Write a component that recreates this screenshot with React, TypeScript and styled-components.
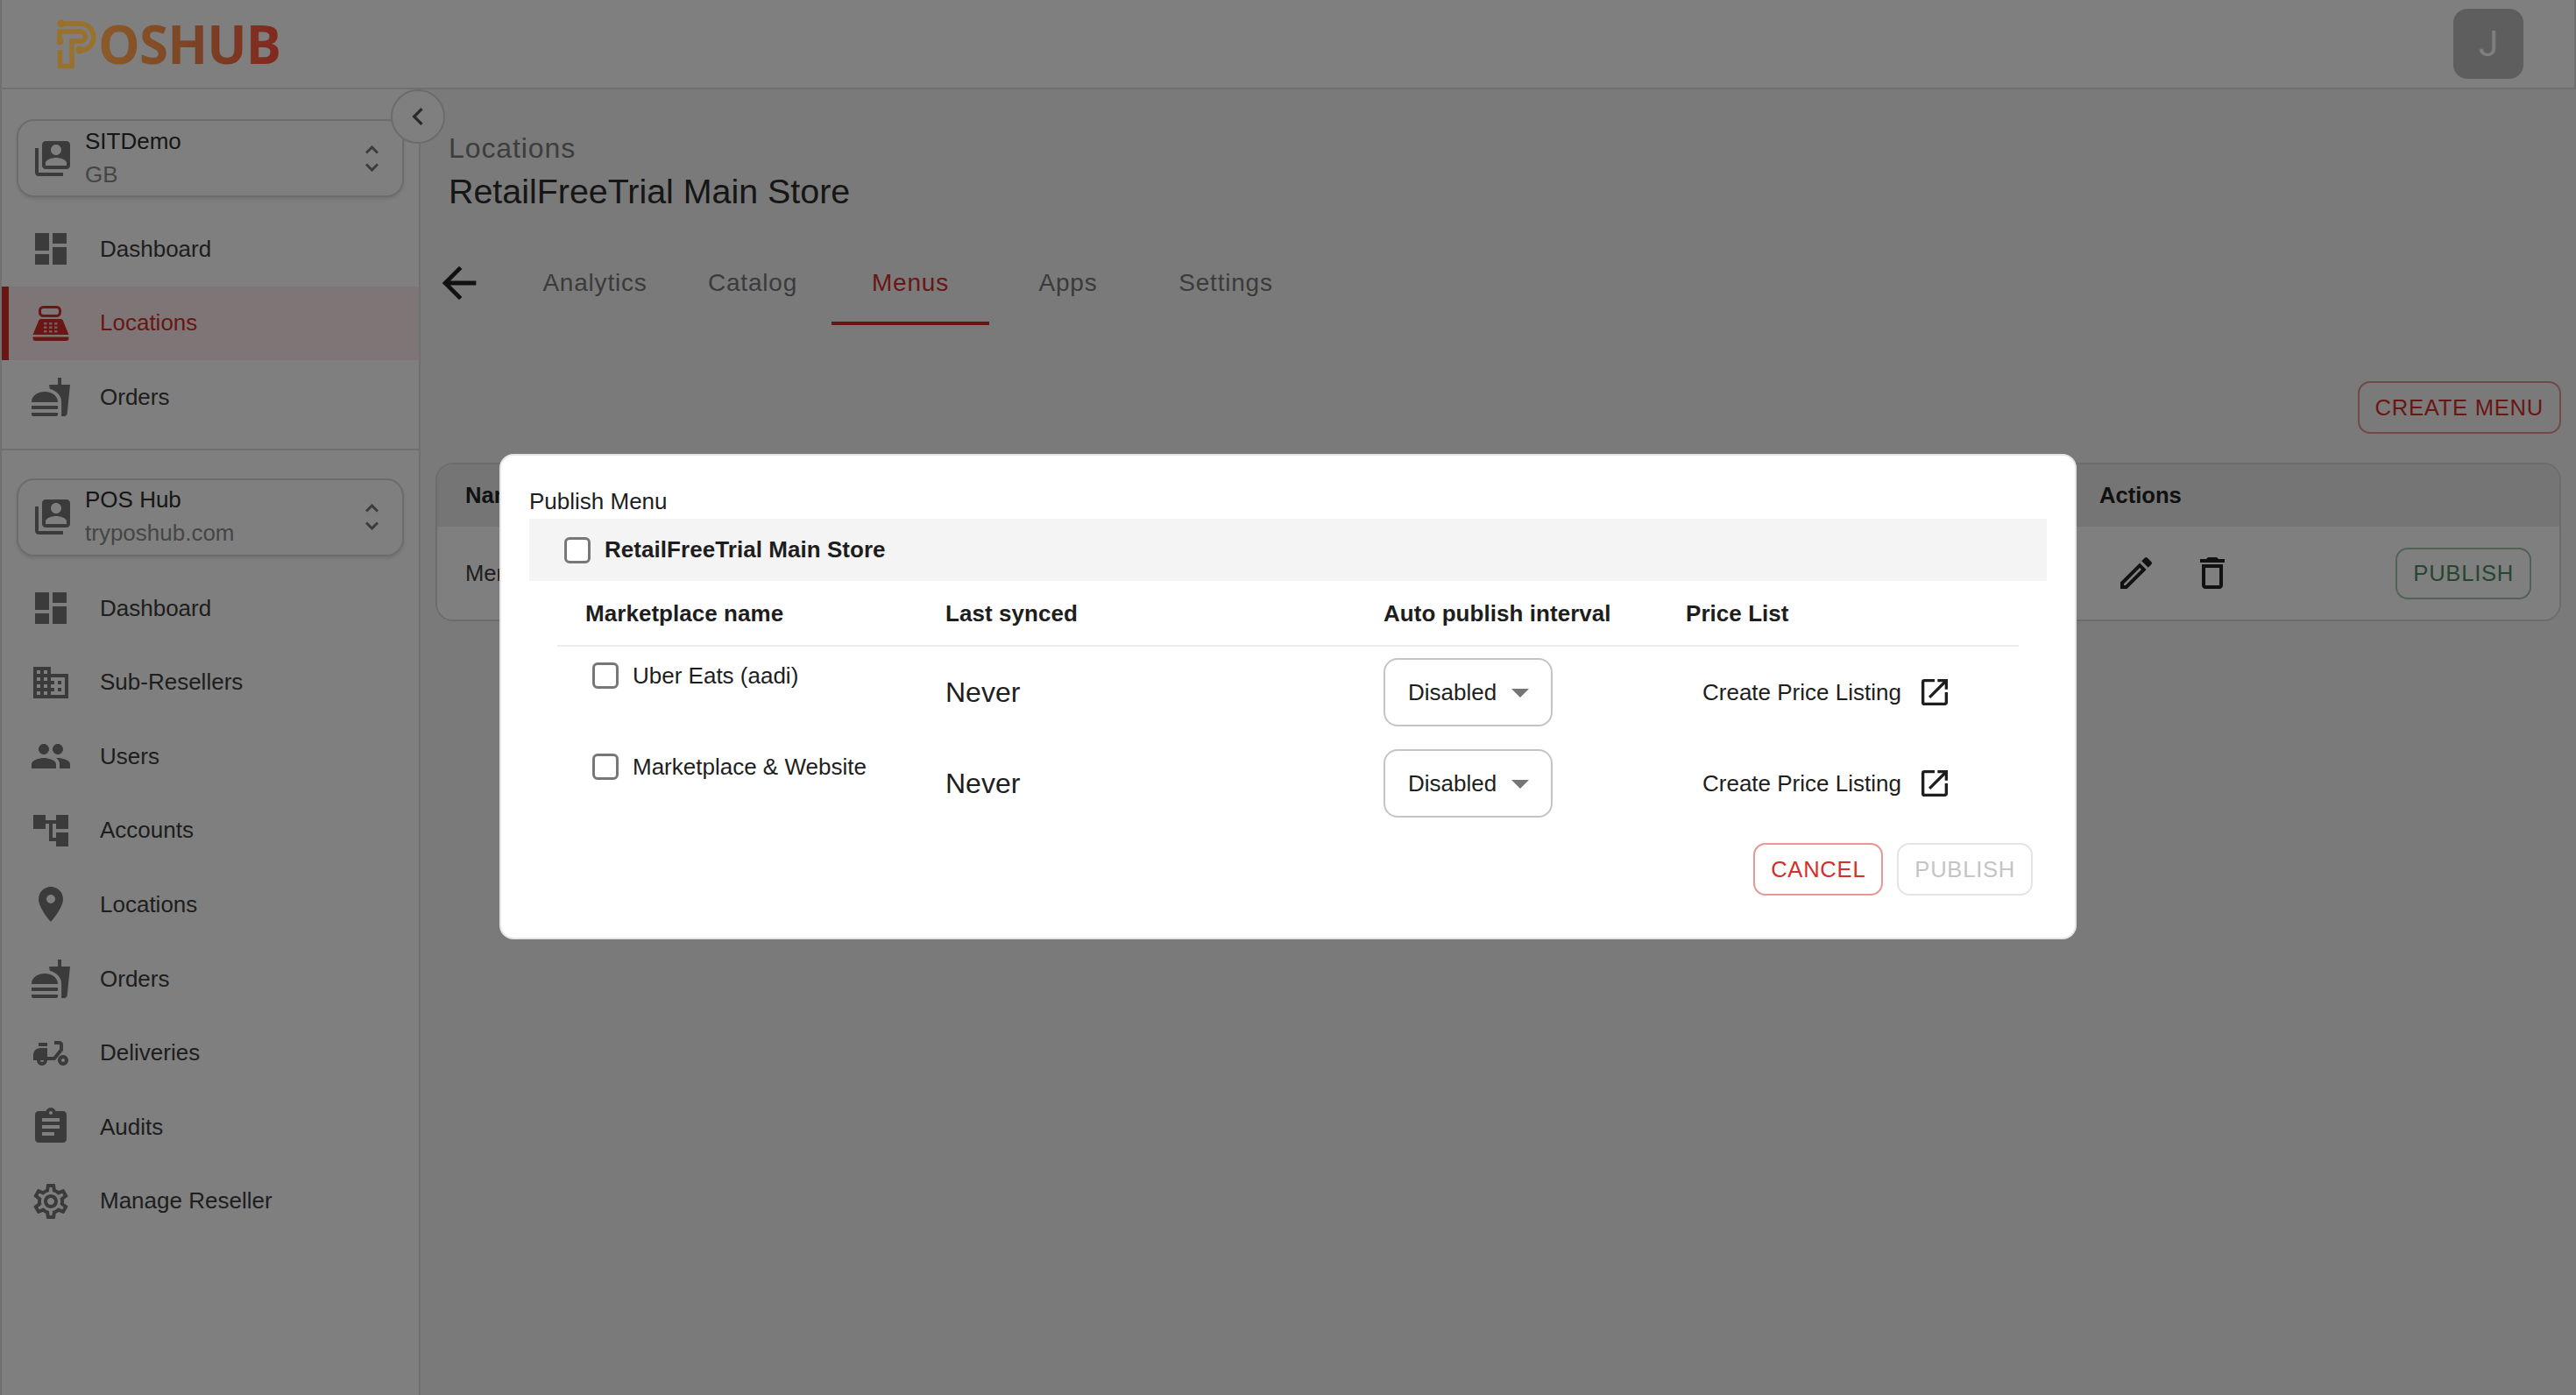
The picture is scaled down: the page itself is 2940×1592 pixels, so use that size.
import React from "react";
import styled, { createGlobalStyle } from "styled-components";
import {
  MdDashboard,
  MdFastfood,
  MdDomain,
  MdPeople,
  MdAccountTree,
  MdLocationOn,
  MdDeliveryDining,
  MdAssignment,
  MdOutlineSettings,
  MdOpenInNew,
  MdOutlineEdit,
  MdOutlineDelete,
  MdArrowBack,
  MdChevronLeft,
  MdSwitchAccount,
  MdArrowDropDown,
} from "react-icons/md";

const Global = createGlobalStyle`
  html, body { margin: 0; height: 100%; overflow: hidden; background: #f5f5f5; }
  * { box-sizing: border-box; }
  body { font-family: "Liberation Sans", Arial, sans-serif; color: #3c3c3c; }
  #root { height: 100%; }
`;

const RED = "#d32f2b";

const Page = styled.div`
  display: flex;
  flex-direction: column;
  height: 1592px;
  width: 2940px;
`;

const Header = styled.header`
  display: flex;
  align-items: center;
  justify-content: space-between;
  height: 102px;
  flex: none;
  background: #fff;
  border: 2px solid #e0e0e0;
  border-top: none;
  padding: 0 58px 0 63px;
`;

const Logo = styled.div`
  display: flex;
  align-items: center;
  gap: 1px;
  position: relative;
  z-index: 20;
`;

const LogoWord = styled.span`
  font-family: "Open Sans", sans-serif;
  font-weight: 700;
  font-size: 60px;
  line-height: 60px;
  letter-spacing: -0.8px;
  background: linear-gradient(90deg, #8c5b2a 0%, #7a4224 55%, #82281f 100%);
  -webkit-background-clip: text;
  background-clip: text;
  color: transparent;
`;

const Avatar = styled.div`
  width: 80px;
  height: 80px;
  border-radius: 16px;
  background: #bdbdbd;
  color: #fff;
  font-size: 40px;
  display: flex;
  align-items: center;
  justify-content: center;
  font-family: Roboto, sans-serif;
`;

const Body = styled.div`
  display: flex;
  flex: 1;
  min-height: 0;
`;

const Sidebar = styled.aside`
  position: relative;
  width: 480px;
  flex: none;
  background: #fff;
  border-left: 2px solid #e0e0e0;
  border-right: 2px solid #e0e0e0;
  padding-top: 34px;
`;

const Collapse = styled.button`
  position: absolute;
  top: 0;
  left: 444px;
  width: 62px;
  height: 62px;
  border-radius: 50%;
  border: 2px solid #d6d6d6;
  background: #fff;
  color: #555;
  padding: 0;
  display: flex;
  align-items: center;
  justify-content: center;
`;

const OrgCard = styled.div`
  display: flex;
  align-items: center;
  height: 89px;
  margin: 0 17px;
  padding: 0 27px 0 15px;
  border: 2px solid #d8d8d8;
  border-radius: 20px;
  box-shadow: 0 2px 4px rgba(0, 0, 0, 0.12);
  color: #777;
`;

const OrgText = styled.div`
  flex: 1;
  margin-left: 13px;
  padding-bottom: 2px;
  display: flex;
  flex-direction: column;
  gap: 8px;
`;

const OrgName = styled.span`
  font-size: 26px;
  line-height: 30px;
  color: #2c2c2c;
`;

const OrgSub = styled.span`
  font-size: 26px;
  line-height: 30px;
  color: #8c8c8c;
`;

const NavList = styled.nav`
  display: flex;
  flex-direction: column;
  margin-top: 17px;
`;

const NavRow = styled.a<{ $active?: boolean }>`
  display: flex;
  align-items: center;
  gap: 32px;
  height: 84.6px;
  padding-left: ${(p) => (p.$active ? 24 : 32)}px;
  font-size: 26px;
  color: ${(p) => (p.$active ? RED : "#3c3c3c")};
  background: ${(p) => (p.$active ? "#fdecec" : "transparent")};
  border-left: ${(p) => (p.$active ? `8px solid ${RED}` : "none")};
  svg {
    color: ${(p) => (p.$active ? RED : "#777")};
    flex: none;
  }
`;

const Divider = styled.hr`
  border: none;
  height: 2px;
  background: #dfdfdf;
  margin: 16px 0 32px;
`;

const Main = styled.main`
  flex: 1;
  min-width: 0;
  padding: 47px 17px 0 15px;
  display: flex;
  flex-direction: column;
`;

const Crumb = styled.div`
  margin-left: 17px;
  font-size: 32px;
  line-height: 40px;
  letter-spacing: 0.9px;
  color: #7a7a7a;
`;

const Title = styled.h1`
  margin: 6px 0 0 17px;
  font-size: 39.4px;
  line-height: 46px;
  font-weight: 400;
  color: #2c2c2c;
`;

const TabBar = styled.div`
  display: flex;
  align-items: center;
  height: 96px;
  margin-top: 34px;
  color: #222;
`;

const Tabs = styled.div`
  display: flex;
  margin-left: 36px;
`;

const Tab = styled.a<{ $active?: boolean }>`
  width: 180px;
  height: 96px;
  padding-top: 4px;
  display: flex;
  align-items: center;
  justify-content: center;
  font-size: 28px;
  letter-spacing: 0.8px;
  color: ${(p) => (p.$active ? RED : "#777")};
  border-bottom: 4px solid ${(p) => (p.$active ? RED : "transparent")};
`;

const Toolbar = styled.div`
  display: flex;
  justify-content: flex-end;
  margin-top: 64px;
`;

const Button = styled.button<{ $tone: "red" | "green" | "off" }>`
  font-family: inherit;
  font-size: 25.6px;
  letter-spacing: 0.73px;
  height: ${(p) => (p.$tone === "green" ? 59 : 60)}px;
  padding: 0 18px;
  background: transparent;
  border-radius: 14px;
  border: 2px solid
    ${(p) =>
      p.$tone === "red"
        ? "rgba(211,47,43,.5)"
        : p.$tone === "green"
          ? "rgba(70,140,90,.5)"
          : "#e4e4e4"};
  color: ${(p) =>
    p.$tone === "red" ? RED : p.$tone === "green" ? "#4e8d5e" : "#c4c4c4"};
`;

const TableCard = styled.section`
  margin: 33px 0 0 2px;
  border: 2px solid #d8d8d8;
  border-radius: 20px;
  background: #fff;
  overflow: hidden;
`;

const BgRow = styled.div<{ $head?: boolean }>`
  display: flex;
  align-items: center;
  height: ${(p) => (p.$head ? 71 : 106)}px;
  padding: 0 32px;
  background: ${(p) => (p.$head ? "#ebebeb" : "#fff")};
  font-size: 25.6px;
  font-weight: ${(p) => (p.$head ? 700 : 400)};
  color: ${(p) => (p.$head ? "#222" : "#3c3c3c")};
`;

const NameCell = styled.div`
  width: 1865px;
`;

const ActionCell = styled.div`
  flex: 1;
  display: flex;
  align-items: center;
  justify-content: space-between;
  color: #222;
`;

const IconGroup = styled.div`
  display: flex;
  align-items: center;
  gap: 39px;
  margin-left: 18px;
`;

const Overlay = styled.div`
  position: fixed;
  inset: 0;
  z-index: 10;
  padding-bottom: 2px;
  background: rgba(0, 0, 0, 0.5);
  display: flex;
  align-items: center;
  justify-content: center;
`;

const Modal = styled.div`
  width: 1800px;
  height: 554px;
  background: #fff;
  border: 2px solid #e6e6e6;
  border-radius: 16px;
  padding: 36px 32px 0;
  color: #1e1e1e;
`;

const ModalTitle = styled.div`
  font-size: 26px;
  line-height: 32px;
  height: 36px;
`;

const StoreBand = styled.div`
  display: flex;
  align-items: center;
  gap: 16px;
  height: 71px;
  padding-left: 40px;
  background: #f4f4f4;
  font-size: 26px;
  letter-spacing: 0.05px;
  font-weight: 700;
`;

const Check = styled.input.attrs({ type: "checkbox" })`
  appearance: none;
  margin: 0;
  flex: none;
  width: 30px;
  height: 30px;
  border: 3px solid #777;
  border-radius: 6px;
  background: #fff;
`;

const MarketTable = styled.div`
  margin: 0 32px;
`;

const GridRow = styled.div<{ $head?: boolean }>`
  display: grid;
  grid-template-columns: 443px 500px 345px 380px;
  height: ${(p) => (p.$head ? 75 : 104)}px;
  padding-top: ${(p) => (p.$head ? 2 : 0)}px;
  border-bottom: ${(p) => (p.$head ? "2px solid #ececec" : "none")};
  align-items: center;
`;

const HeadCell = styled.div<{ $first?: boolean }>`
  font-size: 26px;
  font-weight: 700;
  letter-spacing: 0.05px;
  padding-left: ${(p) => (p.$first ? 32 : 0)}px;
`;

const MarketCell = styled.label`
  align-self: start;
  display: flex;
  align-items: center;
  gap: 16px;
  padding: 18px 0 0 40px;
  font-size: 26px;
  line-height: 30px;
`;

const Never = styled.div`
  font-size: 32px;
`;

const SelectBox = styled.div`
  display: flex;
  align-items: center;
  justify-content: space-between;
  width: 193px;
  height: 78px;
  padding: 0 11px 0 26px;
  border: 2px solid #c4c4c4;
  border-radius: 16px;
  font-size: 26px;
  svg {
    color: #757575;
    flex: none;
  }
`;

const PriceLink = styled.a`
  display: flex;
  align-items: center;
  gap: 18px;
  padding-left: 19px;
  font-size: 26px;
  color: #1e1e1e;
`;

const ModalActions = styled.div`
  display: flex;
  justify-content: flex-end;
  gap: 16px;
  margin: 16px 16px 0 0;
`;

const LogoMark = () => (
  <svg width="46" height="60" viewBox="65 20 46 60" fill="none" stroke="#9a712c" strokeWidth="5.500">
    <circle cx="70" cy="27" r="4.500" fill="#9a712c" stroke="none" />
    <circle cx="68" cy="47" r="4.500" fill="#9a712c" stroke="none" />
    <circle cx="91" cy="57" r="4.500" fill="#9a712c" stroke="none" />
    <path d="M70 27H92A15.500 15.500 0 0 1 98 56.500Q94 57.500 91 57" />
    <path d="M68 47V36H92A5.500 5.500 0 0 1 92 47H82V75.500H68.500V57" />
  </svg>
);

const RegisterIcon = () => (
  <svg width="48" height="48" viewBox="0 0 48 48">
    <rect x="11.500" y="5.500" width="23" height="10" rx="4" fill="none" stroke="currentColor" strokeWidth="3" />
    <path d="M12.500 19H35.500Q37 19 37.700 20.500L44.500 37H3.500L10.300 20.500Q11 19 12.500 19Z" fill="currentColor" />
    <path d="M3.500 39.500H44.500V41Q44.500 44 41.500 44H6.500Q3.500 44 3.500 41Z" fill="currentColor" />
    <g fill="#e9b9b6">
      <rect x="16" y="23" width="3.500" height="2.500" />
      <rect x="22" y="23" width="3.500" height="2.500" />
      <rect x="28" y="23" width="3.500" height="2.500" />
      <rect x="16" y="27.500" width="3.500" height="2.500" />
      <rect x="22" y="27.500" width="3.500" height="2.500" />
      <rect x="28" y="27.500" width="3.500" height="2.500" />
      <rect x="16" y="32" width="3.500" height="2.500" />
      <rect x="22" y="32" width="3.500" height="2.500" />
      <rect x="28" y="32" width="3.500" height="2.500" />
    </g>
  </svg>
);

const UpDown = () => (
  <svg width="15" height="30" viewBox="0 0 15 30" fill="none" stroke="#777" strokeWidth="3">
    <path d="M1 8.500L7.500 2L14 8.500" />
    <path d="M1 21.500L7.500 28L14 21.500" />
  </svg>
);

const Org = ({ name, sub }: { name: string; sub: string }) => (
  <OrgCard>
    <MdSwitchAccount size={48} />
    <OrgText>
      <OrgName>{name}</OrgName>
      <OrgSub>{sub}</OrgSub>
    </OrgText>
    <UpDown />
  </OrgCard>
);

const topNav = [
  { label: "Dashboard", icon: <MdDashboard size={48} /> },
  { label: "Locations", icon: <RegisterIcon />, active: true },
  { label: "Orders", icon: <MdFastfood size={48} /> },
];

const bottomNav = [
  { label: "Dashboard", icon: <MdDashboard size={48} /> },
  { label: "Sub-Resellers", icon: <MdDomain size={48} /> },
  { label: "Users", icon: <MdPeople size={48} /> },
  { label: "Accounts", icon: <MdAccountTree size={48} /> },
  { label: "Locations", icon: <MdLocationOn size={48} /> },
  { label: "Orders", icon: <MdFastfood size={48} /> },
  { label: "Deliveries", icon: <MdDeliveryDining size={48} /> },
  { label: "Audits", icon: <MdAssignment size={48} /> },
  { label: "Manage Reseller", icon: <MdOutlineSettings size={48} /> },
];

const Nav = ({ items }: { items: { label: string; icon: React.ReactNode; active?: boolean }[] }) => (
  <NavList>
    {items.map((it) => (
      <NavRow key={it.label} $active={it.active}>
        {it.icon}
        {it.label}
      </NavRow>
    ))}
  </NavList>
);

const tabs = ["Analytics", "Catalog", "Menus", "Apps", "Settings"];
const markets = ["Uber Eats (aadi)", "Marketplace & Website"];

export default function App() {
  return (
    <Page>
      <Global />
      <Header>
        <Logo>
          <LogoMark />
          <LogoWord>OSHUB</LogoWord>
        </Logo>
        <Avatar>J</Avatar>
      </Header>
      <Body>
        <Sidebar>
          <Collapse aria-label="Collapse">
            <MdChevronLeft size={40} />
          </Collapse>
          <Org name="SITDemo" sub="GB" />
          <Nav items={topNav} />
          <Divider />
          <Org name="POS Hub" sub="tryposhub.com" />
          <Nav items={bottomNav} />
        </Sidebar>
        <Main>
          <Crumb>Locations</Crumb>
          <Title>RetailFreeTrial Main Store</Title>
          <TabBar>
            <MdArrowBack size={58} />
            <Tabs>
              {tabs.map((t) => (
                <Tab key={t} $active={t === "Menus"}>
                  {t}
                </Tab>
              ))}
            </Tabs>
          </TabBar>
          <Toolbar>
            <Button $tone="red">CREATE MENU</Button>
          </Toolbar>
          <TableCard>
            <BgRow $head>
              <NameCell>Name</NameCell>
              <div>Actions</div>
            </BgRow>
            <BgRow>
              <NameCell>Menu</NameCell>
              <ActionCell>
                <IconGroup>
                  <MdOutlineEdit size={48} />
                  <MdOutlineDelete size={48} />
                </IconGroup>
                <Button $tone="green">PUBLISH</Button>
              </ActionCell>
            </BgRow>
          </TableCard>
        </Main>
      </Body>
      <Overlay>
        <Modal>
          <ModalTitle>Publish Menu</ModalTitle>
          <StoreBand>
            <Check />
            RetailFreeTrial Main Store
          </StoreBand>
          <MarketTable>
            <GridRow $head>
              <HeadCell $first>Marketplace name</HeadCell>
              <HeadCell>Last synced</HeadCell>
              <HeadCell>Auto publish interval</HeadCell>
              <HeadCell>Price List</HeadCell>
            </GridRow>
            {markets.map((m) => (
              <GridRow key={m}>
                <MarketCell>
                  <Check />
                  {m}
                </MarketCell>
                <Never>Never</Never>
                <SelectBox>
                  Disabled
                  <MdArrowDropDown size={48} />
                </SelectBox>
                <PriceLink>
                  Create Price Listing
                  <MdOpenInNew size={40} />
                </PriceLink>
              </GridRow>
            ))}
          </MarketTable>
          <ModalActions>
            <Button $tone="red">CANCEL</Button>
            <Button $tone="off">PUBLISH</Button>
          </ModalActions>
        </Modal>
      </Overlay>
    </Page>
  );
}
